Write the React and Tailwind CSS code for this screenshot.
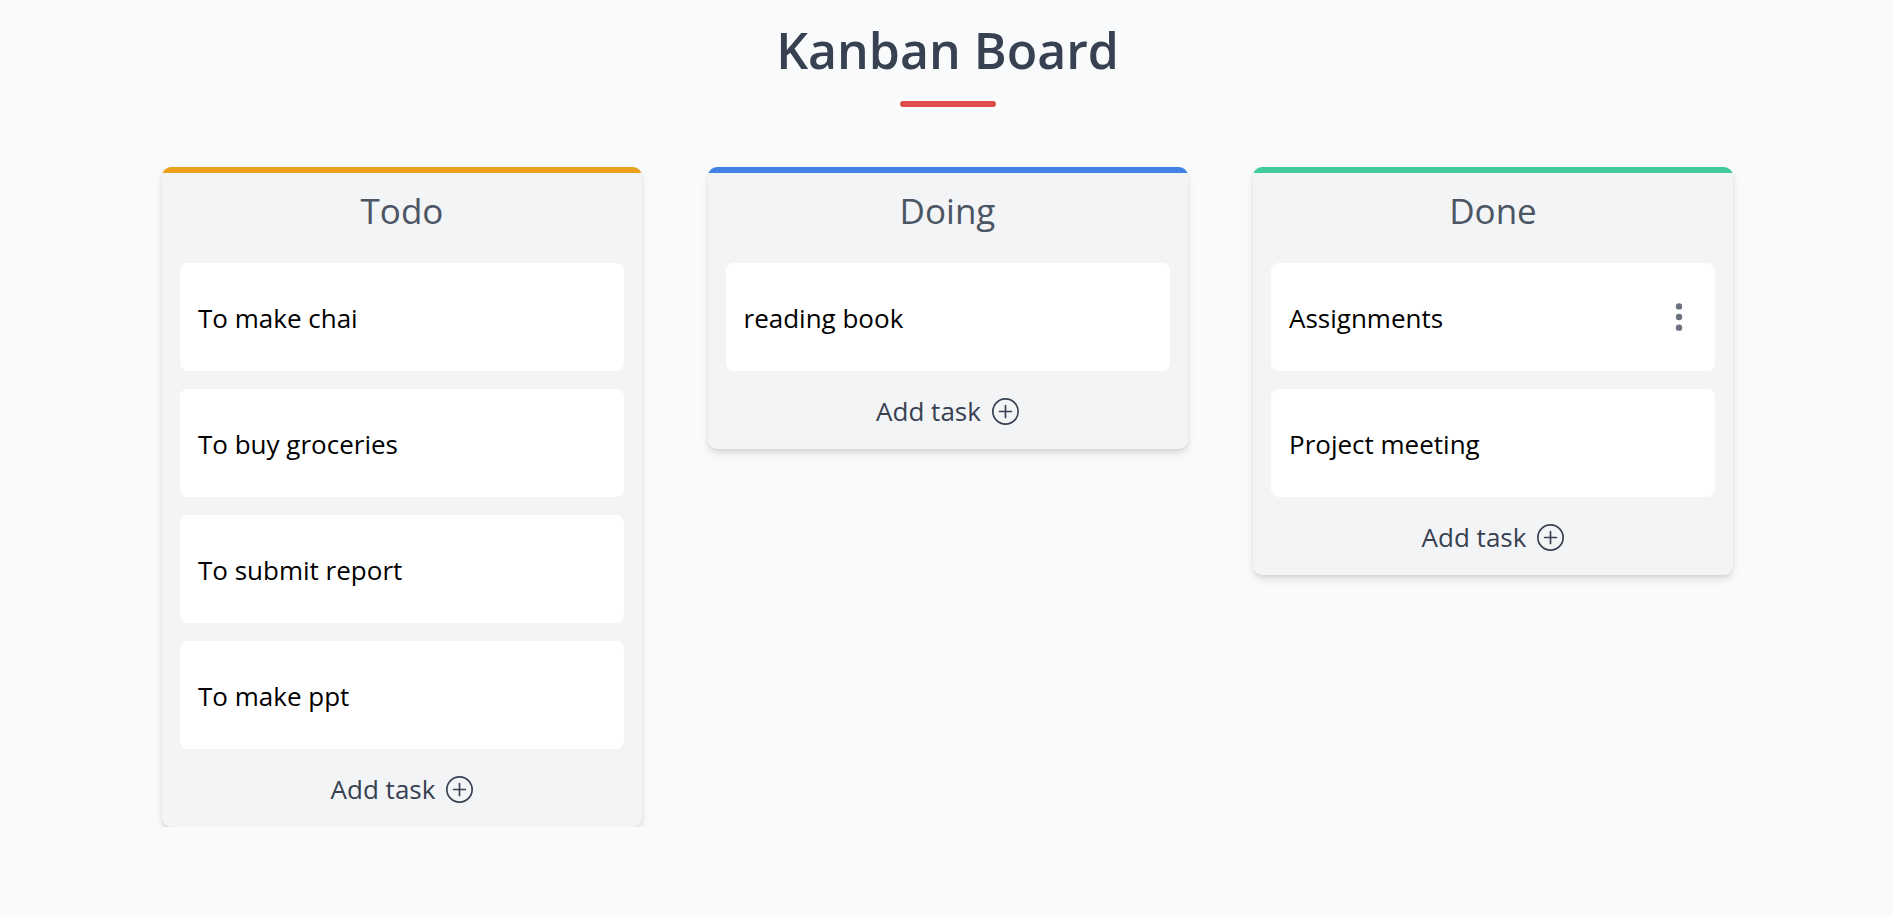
import { BsPlusCircle, BsThreeDotsVertical } from 'react-icons/bs';

const COLUMNS = [
  {
    id: 'todo',
    title: 'Todo',
    bar: 'bg-[#eaa11e]',
    tasks: [
      { id: 1, name: 'To make chai' },
      { id: 2, name: 'To buy groceries' },
      { id: 3, name: 'To submit report' },
      { id: 4, name: 'To make ppt' },
    ],
  },
  {
    id: 'doing',
    title: 'Doing',
    bar: 'bg-[#4481e6]',
    tasks: [{ id: 5, name: 'reading book' }],
  },
  {
    id: 'done',
    title: 'Done',
    bar: 'bg-[#42cb9a]',
    tasks: [
      { id: 6, name: 'Assignments', menu: true },
      { id: 7, name: 'Project meeting' },
    ],
  },
];

function TaskCard({ task }) {
  return (
    <li className="flex h-27 items-center justify-between rounded-lg bg-white px-[18px]">
      <span className="pt-0.5 text-[26px] leading-9 text-black">{task.name}</span>
      {task.menu && (
        <button type="button" aria-label="Task options" className="flex size-9 items-center justify-center text-[#6b7280]">
          <BsThreeDotsVertical size={34} />
        </button>
      )}
    </li>
  );
}

function Column({ column }) {
  return (
    <section className="w-full max-w-[480px] overflow-hidden rounded-[9px] bg-[#f3f4f6] shadow-[0_5px_8px_-1px_rgba(0,0,0,0.12),0_2px_4px_-1px_rgba(0,0,0,0.08)]">
      <div className={`h-1.5 ${column.bar}`} />
      <div className="px-[18px] pb-[18px]">
        <h2 className="pt-3.5 pb-7 text-center text-[35px] leading-12 text-[#4b5563]">{column.title}</h2>
        <ul className="flex flex-col gap-[18px]">
          {column.tasks.map(task => (
            <TaskCard key={task.id} task={task} />
          ))}
        </ul>
        <button type="button" className="mx-auto mt-5 flex h-10 items-center gap-[11px] text-[26px] text-[#374151]">
          Add task
          <BsPlusCircle size={27} />
        </button>
      </div>
    </section>
  );
}

export default function App() {
  return (
    <div className="min-h-screen bg-[#f9fafb] pl-0.5 font-['Open_Sans','Noto_Sans',sans-serif]">
      <header className="flex flex-col items-center pt-4">
        <h1 className="text-[50px] leading-17 font-semibold text-[#374151]">Kanban Board</h1>
        <div className="mt-[17px] h-1.5 w-24 rounded-full bg-[#e14b4b]" />
      </header>
      {/* the board clips the shadow of its tallest column */}
      <main className="mt-[54px] flex items-start justify-between gap-12 overflow-hidden px-40 pt-1.5">
        {COLUMNS.map(column => (
          <Column key={column.id} column={column} />
        ))}
      </main>
    </div>
  );
}
